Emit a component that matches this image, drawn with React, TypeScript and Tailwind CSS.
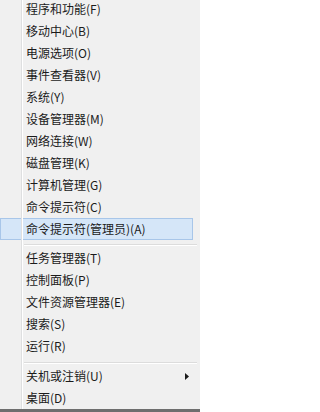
import React from "react";

type Item = { label: string; active?: boolean; sub?: boolean };

// Win+X power user menu, grouped the way Windows draws it
const GROUPS: Item[][] = [
  [
    { label: "程序和功能(F)" },
    { label: "移动中心(B)" },
    { label: "电源选项(O)" },
    { label: "事件查看器(V)" },
    { label: "系统(Y)" },
    { label: "设备管理器(M)" },
    { label: "网络连接(W)" },
    { label: "磁盘管理(K)" },
    { label: "计算机管理(G)" },
    { label: "命令提示符(C)" },
    { label: "命令提示符(管理员)(A)", active: true },
  ],
  [
    { label: "任务管理器(T)" },
    { label: "控制面板(P)" },
    { label: "文件资源管理器(E)" },
    { label: "搜索(S)" },
    { label: "运行(R)" },
  ],
  [{ label: "关机或注销(U)", sub: true }, { label: "桌面(D)" }],
];

function Gutter() {
  return (
    <>
      <span className="w-[21px] shrink-0 self-stretch" />
      <span className="w-px shrink-0 self-stretch bg-[#dedfe0]" />
      <span className="w-px shrink-0 self-stretch bg-white" />
    </>
  );
}

function Row({ item }: { item: Item }) {
  return (
    <div
      className={
        "flex h-[22px] w-[193px] items-stretch " +
        (item.active ? "bg-[#d5e6f8] shadow-[inset_0_0_0_1px_#a8c6e9]" : "")
      }
    >
      <Gutter />
      <span className="flex flex-1 items-center pl-[3px] text-[12px] leading-none text-[#1b1b1b]">
        {item.label}
      </span>
      {item.sub && (
        <span className="flex items-center pr-[4px]">
          <svg width="4" height="7" viewBox="0 0 4 7">
            <path d="M0 0 L4 3.5 L0 7 Z" fill="#1b1b1b" />
          </svg>
        </span>
      )}
    </div>
  );
}

function Separator({ top }: { top: number }) {
  return (
    <div className="flex items-stretch" style={{ height: top + 3 }}>
      <Gutter />
      <div className="flex flex-1 flex-col pl-[1px] pr-[3px]" style={{ paddingTop: top }}>
        <div className="h-px bg-[#dcdcdc]" />
        <div className="h-px bg-white" />
      </div>
    </div>
  );
}

export default function App() {
  return (
    <div
      className="flex h-[412px] w-[200px] flex-col overflow-hidden bg-[#f0f0f0]"
      style={{ fontFamily: '"Noto Sans CJK SC", "Noto Sans", sans-serif' }}
    >
      <div className="-mt-[2px] flex flex-1 flex-col">
        {GROUPS.map((g, gi) => (
          <React.Fragment key={gi}>
            {gi === 1 && <Separator top={4} />}
            {gi === 2 && <Separator top={5} />}
            {g.map((it) => (
              <Row key={it.label} item={it} />
            ))}
          </React.Fragment>
        ))}
        <div className="flex flex-1 items-stretch">
          <Gutter />
        </div>
      </div>
      <div className="h-[3px] bg-[#6e6e6e]" />
    </div>
  );
}
